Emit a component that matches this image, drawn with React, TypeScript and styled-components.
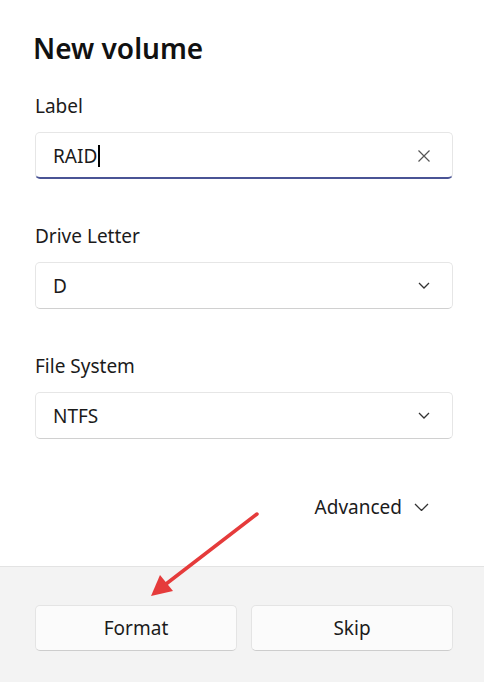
import React from 'react';
import styled, { createGlobalStyle } from 'styled-components';

const GlobalStyle = createGlobalStyle`
  html, body {
    margin: 0;
    padding: 0;
    background: #fff;
  }
  body {
    font-family: "Noto Sans", "Open Sans", sans-serif;
    color: #1b1b1b;
  }
`;

const Page = styled.div`
  position: relative;
  width: 484px;
  height: 682px;
  display: flex;
  flex-direction: column;
  overflow: hidden;
`;

const Main = styled.div`
  flex: 1;
  display: flex;
  flex-direction: column;
  padding: 30px 31px 0 35px;
`;

const Title = styled.h1`
  margin: 0 0 27px -2px;
  font-size: 28px;
  line-height: 36px;
  font-weight: 600;
  color: #111;
`;

const Field = styled.div`
  display: flex;
  flex-direction: column;
  gap: 13px;
  margin-bottom: 44px;
`;

const Label = styled.label`
  font-size: 19px;
  line-height: 26px;
  color: #1b1b1b;
`;

const Box = styled.div<{ focused?: boolean }>`
  box-sizing: border-box;
  height: 47px;
  display: flex;
  align-items: center;
  padding: ${p => (p.focused ? '1px 22px 0 17px' : '0 22px 0 17px')};
  background: #fff;
  border: 1px solid #e6e6e6;
  border-bottom: ${p => (p.focused ? '2px solid #4a5495' : '1px solid #d0d0d0')};
  border-radius: 5px;
  font-size: 19px;
  color: #1b1b1b;
`;

const Value = styled.span`
  flex: 1;
  display: flex;
  align-items: center;
`;

const Caret = styled.span`
  display: inline-block;
  width: 2px;
  height: 22px;
  margin-left: 1px;
  background: #000;
`;

const Advanced = styled.div`
  display: flex;
  justify-content: flex-end;
  align-items: center;
  gap: 12px;
  height: 46px;
  margin-top: 1px;
  padding-right: 24px;
  font-size: 19px;
  color: #1b1b1b;
`;

const Footer = styled.div`
  height: 116px;
  box-sizing: border-box;
  background: #f3f3f3;
  border-top: 1px solid #e3e3e3;
  display: grid;
  grid-template-columns: 1fr 1fr;
  gap: 14px;
  padding: 38px 31px 0 35px;
  align-content: start;
`;

const Button = styled.button`
  box-sizing: border-box;
  height: 46px;
  background: #fbfbfb;
  border: 1px solid #e4e4e4;
  border-bottom-color: #cdcdcd;
  border-radius: 5px;
  font-family: inherit;
  font-size: 19px;
  color: #1b1b1b;
`;

const Annotation = styled.svg`
  position: absolute;
  left: 0;
  top: 0;
  pointer-events: none;
`;

const Chevron = ({ size = 12 }: { size?: number }) => (
  <svg width={size} height={size / 2 + 1} viewBox={`0 0 ${size} ${size / 2 + 1}`}>
    <path
      d={`M1 1l${size / 2 - 1} ${size / 2 - 1} ${size / 2 - 1} -${size / 2 - 1}`}
      fill="none"
      stroke="#333"
      strokeWidth="1.3"
    />
  </svg>
);

const Clear = () => (
  <svg width="12" height="12" viewBox="0 0 12 12">
    <path d="M0.5 0.5l11 11M11.5 0.5l-11 11" fill="none" stroke="#555" strokeWidth="1.2" />
  </svg>
);

export default function App() {
  return (
    <>
      <GlobalStyle />
      <Page>
        <Main>
          <Title>New volume</Title>
          <Field>
            <Label>Label</Label>
            <Box focused>
              <Value>
                RAID
                <Caret />
              </Value>
              <Clear />
            </Box>
          </Field>
          <Field>
            <Label>Drive Letter</Label>
            <Box>
              <Value>D</Value>
              <Chevron />
            </Box>
          </Field>
          <Field>
            <Label>File System</Label>
            <Box>
              <Value>NTFS</Value>
              <Chevron />
            </Box>
          </Field>
          <Advanced>
            Advanced
            <Chevron size={15} />
          </Advanced>
        </Main>
        <Footer>
          <Button>Format</Button>
          <Button>Skip</Button>
        </Footer>
        <Annotation width="484" height="682" viewBox="0 0 484 682">
          <line x1="257" y1="514" x2="166" y2="584" stroke="#e53b3b" strokeWidth="3.5" strokeLinecap="round" />
          <path d="M151 596 L160 575 L173 591 Z" fill="#e53b3b" />
        </Annotation>
      </Page>
    </>
  );
}
